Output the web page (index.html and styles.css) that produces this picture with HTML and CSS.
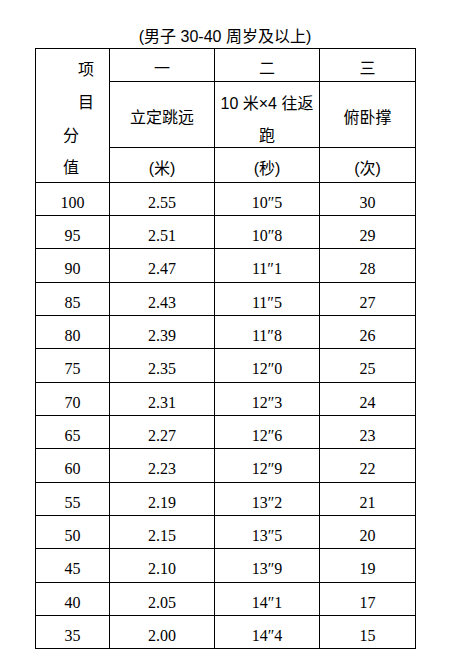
FILE: index.html
```html
<!DOCTYPE html>
<html lang="zh-CN">
<head>
<meta charset="utf-8">
<title>男子 30-40 周岁及以上</title>
<link rel="stylesheet" href="styles.css">
</head>
<body>
<div class="wrap">
  <div class="title">(男子 30-40 周岁及以上)</div>
  <table class="score">
    <colgroup>
      <col class="c1"><col class="c2"><col class="c3"><col class="c4">
    </colgroup>
    <tbody>
      <tr class="h1">
        <td class="corner" rowspan="3">
          <div class="corner-in">
            <div class="ind">项</div>
            <div class="ind">目</div>
            <div>分</div>
            <div>值</div>
          </div>
        </td>
        <td>一</td><td>二</td><td>三</td>
      </tr>
      <tr class="h2">
        <td>立定跳远</td>
        <td class="two"><div class="two-in">10 米×4 往返<br>跑</div></td>
        <td>俯卧撑</td>
      </tr>
      <tr class="h3">
        <td>(米)</td><td>(秒)</td><td>(次)</td>
      </tr>
      <tr class="d"><td>100</td><td>2.55</td><td>10″5</td><td>30</td></tr>
      <tr class="d"><td>95</td><td>2.51</td><td>10″8</td><td>29</td></tr>
      <tr class="d"><td>90</td><td>2.47</td><td>11″1</td><td>28</td></tr>
      <tr class="d"><td>85</td><td>2.43</td><td>11″5</td><td>27</td></tr>
      <tr class="d"><td>80</td><td>2.39</td><td>11″8</td><td>26</td></tr>
      <tr class="d"><td>75</td><td>2.35</td><td>12″0</td><td>25</td></tr>
      <tr class="d"><td>70</td><td>2.31</td><td>12″3</td><td>24</td></tr>
      <tr class="d"><td>65</td><td>2.27</td><td>12″6</td><td>23</td></tr>
      <tr class="d"><td>60</td><td>2.23</td><td>12″9</td><td>22</td></tr>
      <tr class="d"><td>55</td><td>2.19</td><td>13″2</td><td>21</td></tr>
      <tr class="d"><td>50</td><td>2.15</td><td>13″5</td><td>20</td></tr>
      <tr class="d"><td>45</td><td>2.10</td><td>13″9</td><td>19</td></tr>
      <tr class="d"><td>40</td><td>2.05</td><td>14″1</td><td>17</td></tr>
      <tr class="d"><td>35</td><td>2.00</td><td>14″4</td><td>15</td></tr>
    </tbody>
  </table>
</div>
</body>
</html>
```

FILE: styles.css
```css
html, body {
  margin: 0;
  padding: 0;
  background: #fff;
}
body {
  color: #000;
  font-family: "Liberation Sans", "Noto Sans CJK SC", sans-serif;
  font-size: 16px;
}
.wrap {
  width: 380px;
  margin-left: 35px;
  padding-top: 27px;
}
.title {
  text-align: center;
  line-height: 20px;
  height: 21px;
}
.score {
  width: 380px;
  border-collapse: collapse;
  table-layout: fixed;
}
.c1 { width: 74px; }
.c2 { width: 105px; }
.c3 { width: 105px; }
.c4 { width: 96px; }
.score td {
  box-sizing: border-box;
  border: 1px solid #000;
  padding: 8px 0 0;
  text-align: center;
  vertical-align: middle;
  line-height: 18px;
}
.h1 td { height: 32.6px; }
.h2 td { height: 66px; }
.h3 td { height: 35px; }
.d td {
  height: 33.33px;
  font-family: "Liberation Serif", "Noto Sans CJK SC", serif;
}
.score td.corner {
  vertical-align: top;
  text-align: left;
  padding: 5px 0 0 27px;
}
.corner-in {
  height: 120px;
  line-height: 32.8px;
}
.ind {
  padding-left: 15px;
}
.score td.two {
  vertical-align: top;
  padding-top: 6px;
}
.two-in {
  height: 56px;
  line-height: 32px;
}
```
